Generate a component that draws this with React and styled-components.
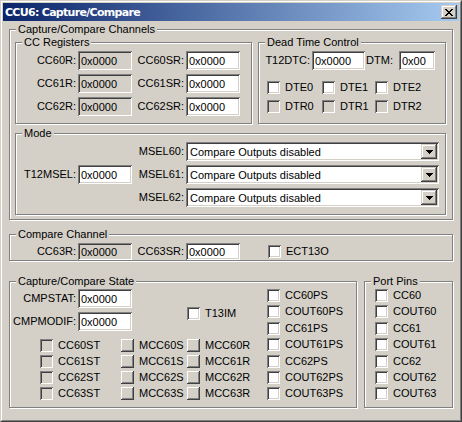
import React from "react";
import styled, { createGlobalStyle, css } from "styled-components";

const FACE = "#D4D0C8";
const FONT = `"Liberation Sans", Arial, sans-serif`;

const Global = createGlobalStyle`
  html, body { margin: 0; padding: 0; background: ${FACE}; }
  body { font-family: ${FONT}; font-size: 11px; color: #000; }
  * { box-sizing: border-box; }
`;

const sunken = css`
  box-shadow: inset 1px 1px #808080, inset -1px -1px #fff, inset 2px 2px #404040,
    inset -2px -2px ${FACE};
`;
const raised = css`
  box-shadow: inset -1px -1px #404040, inset 1px 1px ${FACE}, inset -2px -2px #808080,
    inset 2px 2px #fff;
`;

const Window = styled.div`
  width: 462px;
  height: 422px;
  border: 1px solid;
  border-color: ${FACE} #404040 #404040 ${FACE};
  background: ${FACE};
  overflow: hidden;
`;
const Frame = styled.div`
  height: 100%;
  border: 1px solid;
  border-color: #fff #808080 #808080 #fff;
  padding: 1px;
  display: flex;
  flex-direction: column;
`;
const TitleBar = styled.div`
  height: 18px;
  flex: none;
  display: flex;
  align-items: center;
  justify-content: space-between;
  background: linear-gradient(to right, #0a246a, #a6caf0);
  padding: 0 2px 0 2px;
`;
const Title = styled.span`
  color: #fff;
  font-weight: bold;
  font-family: "DejaVu Sans", ${FONT};
  font-size: 11px;
  letter-spacing: -0.7px;
`;
const CloseButton = styled.div`
  width: 16px;
  height: 14px;
  background: ${FACE};
  ${raised};
  display: flex;
  align-items: center;
  justify-content: center;
`;

const Body = styled.div`
  padding: 8px 6px 0 6px;
  display: flex;
  flex-direction: column;
`;

const Group = styled.div`
  position: relative;
  border: 1px solid #808080;
  box-shadow: inset 1px 1px #fff, 1px 1px #fff;
  height: ${(p) => p.$h}px;
  width: ${(p) => (p.$w ? `${p.$w}px` : "auto")};
  flex: ${(p) => (p.$w ? "none" : "1")};
  margin-top: ${(p) => p.$mt || 0}px;
  padding: ${(p) => p.$pad || "0"};
`;
const Legend = styled.span`
  position: absolute;
  top: -7px;
  left: 6px;
  padding: 0 2px;
  line-height: 13px;
  background: ${FACE};
  white-space: nowrap;
`;

const Row = styled.div`
  display: flex;
  align-items: flex-start;
  gap: ${(p) => p.$gap || 0}px;
  margin-top: ${(p) => p.$mt || 0}px;
`;

const FieldGrid = styled.div`
  display: grid;
  grid-template-columns: ${(p) => p.$cols};
  grid-auto-rows: ${(p) => p.$rh || 19}px;
  row-gap: ${(p) => p.$gap ?? 4}px;
  align-items: center;
  margin-top: ${(p) => p.$mt || 0}px;
`;

const Label = styled.label`
  text-align: right;
  padding-right: ${(p) => p.$pr ?? 2}px;
  white-space: nowrap;
  line-height: 13px;
  grid-row: ${(p) => p.$row || "auto"};
`;

const Field = styled.input`
  border: none;
  outline: none;
  margin: 0;
  width: ${(p) => p.$w || 54}px;
  height: ${(p) => p.$h || 19}px;
  padding: 0 0 0 3px;
  font: 11px ${FONT};
  color: #000;
  background: ${(p) => (p.$ro ? FACE : "#fff")};
  ${sunken};
  grid-row: ${(p) => p.$row || "auto"};
`;

const Combo = styled.div`
  width: 253px;
  height: 19px;
  background: #fff;
  ${sunken};
  padding: 2px;
  display: flex;
  align-items: center;
`;
const ComboValue = styled.span`
  flex: 1;
  padding-left: 2px;
  white-space: nowrap;
  overflow: hidden;
`;
const DropButton = styled.span`
  width: 16px;
  height: 15px;
  background: ${FACE};
  ${raised};
  display: flex;
  align-items: center;
  justify-content: center;
`;

const CheckItem = styled.div`
  display: flex;
  align-items: center;
  height: 13px;
  gap: 5px;
  white-space: nowrap;
  margin: ${(p) => p.$m || 0};
`;
const Box = styled.span`
  width: 13px;
  height: 13px;
  flex: none;
  ${(p) =>
    p.$variant === "raised"
      ? css`
          background: ${FACE};
          box-shadow: inset -1px -1px #404040, inset 1px 1px #fff, inset -2px -2px #808080;
        `
      : css`
          background: ${p.$variant === "disabled" ? FACE : "#fff"};
          ${sunken};
        `}
`;
const CheckLabel = styled.span`
  line-height: 13px;
`;

const Check = ({ label, variant, ...rest }) => (
  <CheckItem {...rest}>
    <Box $variant={variant} />
    <CheckLabel>{label}</CheckLabel>
  </CheckItem>
);

const CheckGrid = styled.div`
  display: grid;
  grid-template-columns: ${(p) => p.$cols};
  grid-template-rows: ${(p) => p.$rows};
  grid-auto-flow: ${(p) => p.$flow || "row"};
  row-gap: ${(p) => p.$gap || 0}px;
  align-items: start;
  padding-left: ${(p) => p.$pl || 0}px;
  margin-top: ${(p) => p.$mt || 0}px;
`;

const Column = styled.div`
  display: flex;
  flex-direction: column;
  width: ${(p) => (p.$w ? `${p.$w}px` : "auto")};
  flex: none;
`;

const PS_ROWS = "16px 17px 16px 17px 16px 16px 13px";

const CloseIcon = () => (
  <svg width="8" height="7" viewBox="0 0 8 7" shapeRendering="crispEdges">
    <path d="M0 0h2v1h-2zM6 0h2v1h-2zM1 1h2v1h-2zM5 1h2v1h-2zM2 2h4v1h-4zM3 3h2v1h-2zM2 4h4v1h-4zM1 5h2v1h-2zM5 5h2v1h-2zM0 6h2v1h-2zM6 6h2v1h-2z" fill="#000" />
  </svg>
);

const Arrow = () => (
  <svg width="7" height="4" viewBox="0 0 7 4" shapeRendering="crispEdges">
    <path d="M0 0h7v1h-7zM1 1h5v1h-5zM2 2h3v1h-3zM3 3h1v1h-1z" fill="#000" />
  </svg>
);

const MselCombo = () => (
  <Combo>
    <ComboValue>Compare Outputs disabled</ComboValue>
    <DropButton>
      <Arrow />
    </DropButton>
  </Combo>
);

export default function App() {
  return (
    <>
      <Global />
      <Window>
        <Frame>
          <TitleBar>
            <Title>CCU6: Capture/Compare</Title>
            <CloseButton>
              <CloseIcon />
            </CloseButton>
          </TitleBar>
          <Body>
            <Group $h={191} $pad="12px 6px 4px 5px">
              <Legend>Capture/Compare Channels</Legend>
              <Row $gap={6}>
                <Group $h={82} $w={237} $pad="8px 0 0 0">
                  <Legend>CC Registers</Legend>
                  <FieldGrid $cols="62px 54px 54px 54px">
                    <Label>CC60R:</Label>
                    <Field $ro readOnly defaultValue="0x0000" />
                    <Label>CC60SR:</Label>
                    <Field readOnly defaultValue="0x0000" />
                    <Label>CC61R:</Label>
                    <Field $ro readOnly defaultValue="0x0000" />
                    <Label>CC61SR:</Label>
                    <Field readOnly defaultValue="0x0000" />
                    <Label>CC62R:</Label>
                    <Field $ro readOnly defaultValue="0x0000" />
                    <Label>CC62SR:</Label>
                    <Field readOnly defaultValue="0x0000" />
                  </FieldGrid>
                </Group>
                <Group $h={82} $pad="8px 0 0 0">
                  <Legend>Dead Time Control</Legend>
                  <FieldGrid $cols="53px 53px 34px 36px">
                    <Label>T12DTC:</Label>
                    <Field $w={53} readOnly defaultValue="0x0000" />
                    <Label $pr={6}>DTM:</Label>
                    <Field $w={36} readOnly defaultValue="0x00" />
                  </FieldGrid>
                  <CheckGrid $cols="55px 53px auto" $rows="13px 13px" $gap={6} $pl={8} $mt={11}>
                    <Check label="DTE0" />
                    <Check label="DTE1" />
                    <Check label="DTE2" />
                    <Check label="DTR0" variant="disabled" />
                    <Check label="DTR1" variant="disabled" />
                    <Check label="DTR2" variant="disabled" />
                  </CheckGrid>
                </Group>
              </Row>
              <Group $h={82} $mt={9} $pad="8px 0 0 0">
                <Legend>Mode</Legend>
                <FieldGrid $cols="62px 54px 54px 253px">
                  <Label $row="1 / span 3">T12MSEL:</Label>
                  <Field $row="1 / span 3" readOnly defaultValue="0x0000" />
                  <Label>MSEL60:</Label>
                  <MselCombo />
                  <Label>MSEL61:</Label>
                  <MselCombo />
                  <Label>MSEL62:</Label>
                  <MselCombo />
                </FieldGrid>
              </Group>
            </Group>

            <Group $h={30} $mt={14} $pad="8px 0 0 0">
              <Legend>Compare Channel</Legend>
              <FieldGrid $cols="68px 54px 54px 54px auto" $rh={17}>
                <Label>CC63R:</Label>
                <Field $ro $h={17} readOnly defaultValue="0x0000" />
                <Label>CC63SR:</Label>
                <Field $h={17} readOnly defaultValue="0x0000" />
                <Check label="ECT13O" $m="0 0 0 28px" />
              </FieldGrid>
            </Group>

            <Row $gap={7} $mt={20}>
              <Group $h={127} $w={348} $pad="7px 0 0 0">
                <Legend>Capture/Compare State</Legend>
                <Row>
                  <Column $w={257}>
                    <Row>
                      <FieldGrid $cols="68px 54px">
                        <Label>CMPSTAT:</Label>
                        <Field readOnly defaultValue="0x0000" />
                        <Label>CMPMODIF:</Label>
                        <Field readOnly defaultValue="0x0000" />
                      </FieldGrid>
                      <Check label="T13IM" $m="18px 0 0 55px" />
                    </Row>
                    <CheckGrid $cols="81px 66px auto" $rows="13px 13px 13px 13px" $gap={3} $pl={30} $mt={8} $flow="column">
                      <Check label="CC60ST" variant="disabled" />
                      <Check label="CC61ST" variant="disabled" />
                      <Check label="CC62ST" variant="disabled" />
                      <Check label="CC63ST" variant="disabled" />
                      <Check label="MCC60S" variant="raised" />
                      <Check label="MCC61S" variant="raised" />
                      <Check label="MCC62S" variant="raised" />
                      <Check label="MCC63S" variant="raised" />
                      <Check label="MCC60R" variant="raised" />
                      <Check label="MCC61R" variant="raised" />
                      <Check label="MCC62R" variant="raised" />
                      <Check label="MCC63R" variant="raised" />
                    </CheckGrid>
                  </Column>
                  <CheckGrid $cols="auto" $rows={PS_ROWS}>
                    <Check label="CC60PS" />
                    <Check label="COUT60PS" />
                    <Check label="CC61PS" />
                    <Check label="COUT61PS" />
                    <Check label="CC62PS" />
                    <Check label="COUT62PS" />
                    <Check label="COUT63PS" />
                  </CheckGrid>
                </Row>
              </Group>
              <Group $h={127} $pad="7px 0 0 10px">
                <Legend>Port Pins</Legend>
                <CheckGrid $cols="auto" $rows={PS_ROWS}>
                  <Check label="CC60" />
                  <Check label="COUT60" />
                  <Check label="CC61" />
                  <Check label="COUT61" />
                  <Check label="CC62" />
                  <Check label="COUT62" />
                  <Check label="COUT63" />
                </CheckGrid>
              </Group>
            </Row>
          </Body>
        </Frame>
      </Window>
    </>
  );
}
